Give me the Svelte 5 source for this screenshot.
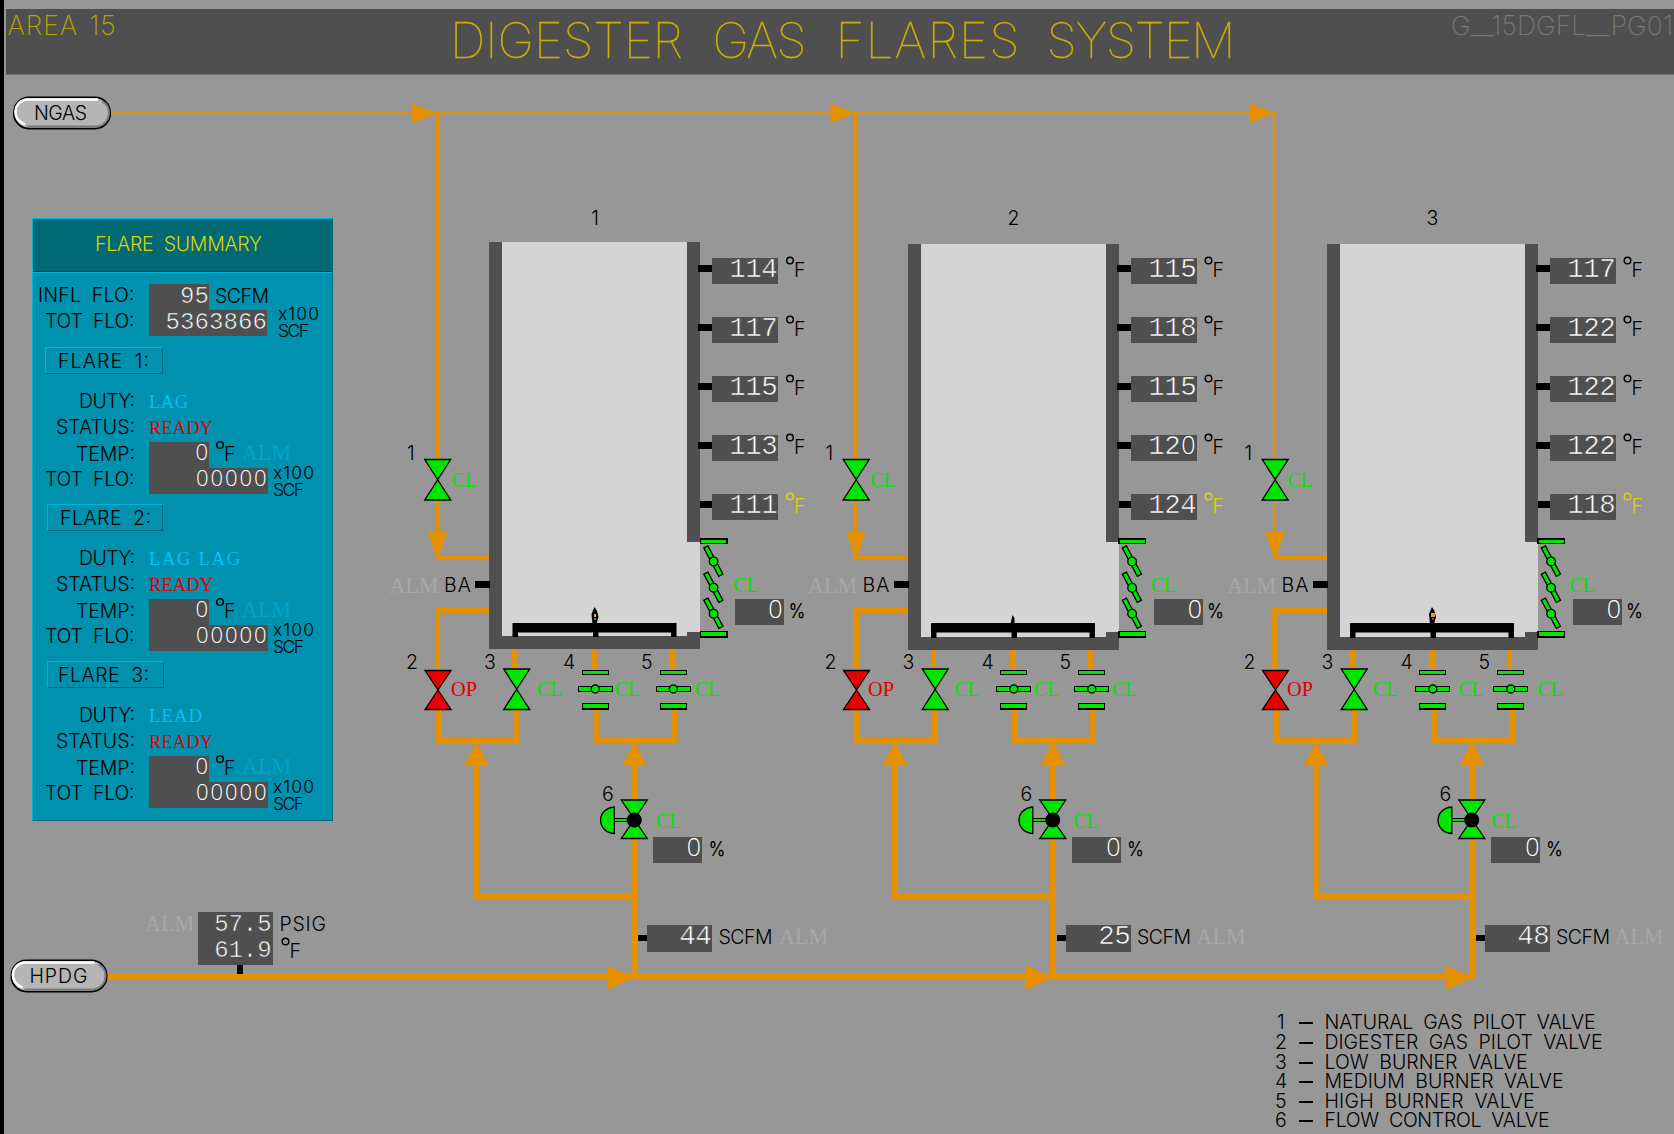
<script>
  // Horizontal origin of each flare train plus the label positions that differ between trains.
  const flares = [
    { n: 1, dx: 0, bx: 0, almX: 779, top: 242, floor: 636, temps: [114, 117, 115, 113, 111], flow: 44,
      cl1: 452, op: 451, cl3: 537, cl4: 615, cl5: 695, cl6: 656, clD: 733.5, flame: 'small', riser: 476.5, arrow: 607.5 },
    { n: 2, dx: 418.5, bx: 1, almX: 778, top: 244, floor: 637, temps: [115, 118, 115, 120, 124], flow: 25,
      cl1: 452, op: 449.5, cl3: 536, cl4: 615.5, cl5: 693.5, cl6: 655, clD: 732.5, flame: 'out', riser: 476.5, arrow: 607.5 },
    { n: 3, dx: 837.5, bx: 1, almX: 777, top: 244, floor: 637, temps: [117, 122, 122, 122, 118], flow: 48,
      cl1: 450, op: 449.5, cl3: 535.5, cl4: 621, cl5: 700, cl6: 654, clD: 732, flame: 'big', riser: 478.5, arrow: 608.5 }
  ];

  const tempRows = [268, 327, 386, 445, 504];

  const summary = [
    { n: 1, duty: 'LAG', dutyW: 39 },
    { n: 2, duty: 'LAG LAG', dutyW: 91 },
    { n: 3, duty: 'LEAD', dutyW: 53 }
  ];

  const titleWords = [
    { t: 'DIGESTER', x: 444, w: 233 },
    { t: 'GAS', x: 706.5, w: 94 },
    { t: 'FLARES', x: 829.5, w: 184 },
    { t: 'SYSTEM', x: 1040.5, w: 189 }
  ];

  const legend = [
    { t: 'NATURAL GAS PILOT VALVE', w: 271, y: 1029 },
    { t: 'DIGESTER GAS PILOT VALVE', w: 278, y: 1049 },
    { t: 'LOW BURNER VALVE', w: 203, y: 1069 },
    { t: 'MEDIUM BURNER VALVE', w: 239, y: 1088 },
    { t: 'HIGH BURNER VALVE', w: 210, y: 1108 },
    { t: 'FLOW CONTROL VALVE', w: 225, y: 1127 }
  ];

  const chars = (v) => String(v).split('');
</script>

{#snippet word(t, w, cls)}
  <svg class="word" width={w + 2} height="22"><text class={cls} x="0" y="17" textLength={w}>{t}</text></svg>
{/snippet}

<!-- right-aligned readout digits; zeros use an open, undotted glyph -->
{#snippet digits(v, right, y, pitch, size)}
  {#each chars(v) as c, i}
    <text class="digit {size}" class:zero={c === '0'} x={right - (chars(v).length - i - 0.5) * pitch} {y}>{c}</text>
  {/each}
{/snippet}

{#snippet degF(x, y)}
  <circle class="ring" cx={x + 4} cy={y - 16} r="3.3" />
  <text class="st" x={x + 8} {y}>F</text>
{/snippet}

{#snippet gate(x, top, bottom, color)}
  {@const mid = (top + bottom) / 2}
  <path class="sym {color}" d="M{x - 13} {top}H{x + 13}L{x} {mid}L{x + 13} {bottom}H{x - 13}L{x} {mid}Z" />
{/snippet}

{#snippet butterfly(x)}
  <rect class="sym green" x={x - 13} y="670.5" width="26" height="4" />
  <rect class="sym green" x={x - 17} y="686.5" width="34" height="5" />
  <circle class="sym green" cx={x} cy="689" r="4" />
  <rect class="sym green" x={x - 13} y="703.5" width="26" height="5.5" />
{/snippet}

{#snippet slab(t, x, y, w, cls)}
  <text class="slab {cls}" {x} {y} textLength={w} lengthAdjust="spacingAndGlyphs">{t}</text>
{/snippet}

<div class="screen">
  <svg class="canvas" width="1674" height="1134" viewBox="0 0 1674 1134">
    <g class="pipe">
      <path class="thin" d="M111 112.7H1275" />
      <path d="M108 976.7H1474" />
    </g>

    {#each flares as f}
      <g transform="translate({f.dx} 0)">
        <g class="pipe">
          <path class="thin" d="M437.3 112V557H490" />
          <path d="M490 610.5H437.5V672" />
          <path d="M438.7 706V741H516.5V706M515 645V670" />
          <path d="M594.5 645V672M672 645V672" />
          <path d="M596.3 706V740H674.3V706" />
          <path d="M634.8 978V745M634.8 897H{f.riser}V750" />
        </g>
        <path class="orange" d="M412 103.5L437 113L412 123Z" />
        <path class="orange" d="M427.5 531H447.5L439 556H436Z" />
        <path class="orange" d="M{f.riser} 742L{f.riser + 12.5} 766H{f.riser - 12.5}Z" />
        <path class="orange" d="M634.5 741L647 766H622Z" />
        <path class="orange" d="M{f.arrow} 965.5L{f.arrow + 26} 977.5L{f.arrow} 990Z" />

        <!-- combustion chamber -->
        <rect class="inner" x="500" y={f.top} width="200" height={f.floor - f.top} />
        <rect class="wall" x="489" y={f.top} width="13" height={f.floor - f.top + 13} />
        <rect class="wall" x="687" y={f.top} width="13" height={542 - f.top} />
        <rect class="wall" x="489" y={f.floor} width="211" height="13" />
        <rect class="wall" x="687" y="632" width="13" height="10" />

        <!-- burner manifold and pilot flame -->
        <path d="M512.5 623H676.5V{f.floor + 1}H671V632.5H598.5V{f.floor + 1}H593V632.5H518V{f.floor + 1}H512.5Z" />
        {#if f.flame === 'out'}
          <path d="M592 624L594 615L596 618V624Z" />
        {:else}
          <path d="M592.5 624L591.5 614L594.5 607L597 611L598.5 617L596.5 624Z" />
          <rect x="594" y="614" width="2" height="3" fill="#f0b400" />
          <rect x="594" y="618" width="2" height="2" fill={f.flame === 'big' ? '#d8251c' : '#1f8fc9'} />
          {#if f.flame === 'big'}
            <rect x="593" y="613" width="4" height="4" fill="#c9a23c" />
          {/if}
        {/if}

        <text class="st mid" x="595" y="225">{f.n}</text>

        {#each f.temps as t, i}
          {@const y = tempRows[i]}
          <rect x={i === 4 ? 700 : 698} y={y - 3} width="14" height="6.5" />
          <rect class="box" x={711.5 + f.bx} y={y - 10} width="66" height="26" />
          {@render digits(t, 777.5 + f.bx / 2, y + 9, 16, 'big')}
          <g class:yellow={i === 4}>{@render degF(786, y + 8.5)}</g>
        {/each}

        <!-- pilot gas valves -->
        {@render gate(437.7, 459.5, 500, 'green')}
        <text class="st" x="407" y="460">1</text>
        {@render slab('CL', f.cl1, 486.5, 25, 'greenT')}
        {@render gate(438, 670.5, 709.5, 'red')}
        <text class="st" x="406" y="669">2</text>
        {@render slab('OP', f.op, 695.5, 26, 'redO')}

        {@render slab('ALM', 389.5, 592.5, 49, 'alm')}
        <text class="st" x="444" y="591.5" textLength="27">BA</text>
        <rect x="475" y="581" width="15" height="6.5" />

        <!-- air damper -->
        <rect class="sym green" x="700.5" y="539" width="26.5" height="4.5" />
        {#each [561.5, 587.7, 613.7] as y}
          <g transform="translate(713.6 {y})">
            <rect class="sym green dash" x="-2.3" y="-16.5" width="4.6" height="32" transform="rotate(-28)" />
            <circle class="sym green" r="4.3" />
          </g>
        {/each}
        <rect class="sym green" x="700.5" y="631.5" width="26.5" height="5.5" />
        {@render slab('CL', f.clD, 591.5, 25, 'greenT')}
        <rect class="box" x={734.5 + f.bx} y="599" width="49" height="25.5" />
        {@render digits(0, 783.5 + f.bx, 617.5, 16, 'big')}
        <text class="st pct" x="788.5" y="617.5" textLength="17" lengthAdjust="spacingAndGlyphs">%</text>

        <!-- burner valves -->
        {@render gate(516.7, 669, 709.5, 'green')}
        <text class="st" x="484" y="669">3</text>
        {@render slab('CL', f.cl3, 695.5, 25, 'greenT')}
        {@render butterfly(595.3)}
        <text class="st" x="563" y="669">4</text>
        {@render slab('CL', f.cl4, 695.5, 25, 'greenT')}
        {@render butterfly(673.3)}
        <text class="st" x="641" y="669">5</text>
        {@render slab('CL', f.cl5, 695.5, 25, 'greenT')}

        <!-- flow control valve -->
        {@render gate(634.3, 800, 838.5, 'green')}
        <rect class="sym green" x="614" y="818.3" width="16" height="3" />
        <path class="sym green" d="M614.3 807V833.5C596 832 596 808.5 614.3 807Z" />
        <circle cx="634.3" cy="820" r="7.5" />
        <text class="st" x="602" y="800.5">6</text>
        {@render slab('CL', f.cl6, 827.5, 25, 'greenT')}
        <rect class="box" x={652.5 + f.bx} y="837" width="49" height="25.5" />
        {@render digits(0, 702 + f.bx, 855.5, 16, 'big')}
        <text class="st pct" x="708.5" y="855.5" textLength="17" lengthAdjust="spacingAndGlyphs">%</text>

        <rect x="638" y="935" width="9" height="6" />
        <rect class="box" x={646.5 + f.bx / 2} y="925" width="65.5" height="27" />
        {@render digits(f.flow, 711.5 + f.bx / 2, 943.5, 16, 'big')}
        <text class="st" x="718.5" y="943.5" textLength="54">SCFM</text>
        {@render slab('ALM', f.almX, 943.5, 49, 'alm')}
      </g>
    {/each}

    <!-- header gas pressure / temperature -->
    {@render slab('ALM', 145, 930.5, 49, 'alm')}
    <rect x="236.5" y="964" width="6" height="10" />
    <rect class="box" x="198" y="912" width="75" height="52.5" />
    {@render digits('57.5', 271.5, 931, 14.3, 'mid')}
    {@render digits('61.9', 271.5, 957, 14.3, 'mid')}
    <text class="st" x="279.5" y="930.5" textLength="46.5">PSIG</text>
    {@render degF(281.5, 957.5)}

    {#each legend as l, i}
      <text class="st" x={i === 0 ? 1277 : 1275} y={l.y}>{i + 1}</text>
      <rect x="1299" y={l.y - 7} width="13.5" height="1.5" />
      <text class="st words" x="1324.5" y={l.y} textLength={l.w}>{l.t}</text>
    {/each}

    {#each [{ x: 13, y: 96.5, w: 98, t: 'NGAS', tx: 34, tw: 53 }, { x: 10.5, y: 959.5, w: 97, t: 'HPDG', tx: 29.5, tw: 58 }] as p}
      <rect class="pill" x={p.x + 0.9} y={p.y + 0.9} width={p.w - 1.8} height="31.2" rx="15" />
      <path class="lit" d="M{p.x + 12} {p.y + 28}C{p.x - 1} {p.y + 24} {p.x - 1} {p.y + 6} {p.x + 13} {p.y + 3}H{p.x + p.w - 13}" />
      <path class="shade" d="M{p.x + 14} {p.y + 30}H{p.x + p.w - 13}C{p.x + p.w + 1} {p.y + 26} {p.x + p.w + 1} {p.y + 9} {p.x + p.w - 9} {p.y + 5}" />
      <text class="st" x={p.tx} y={p.y + 23.5} textLength={p.tw}>{p.t}</text>
    {/each}
  </svg>

  <header>
    <svg class="bar" width="1668" height="66">
      <text class="area" x="1.5" y="26" textLength="108">AREA 15</text>
      {#each titleWords as w}
        <text class="title" x={w.x} y="48.7" textLength={w.w}>{w.t}</text>
      {/each}
      <text class="page" x="1445" y="26" textLength="222">G__15DGFL__PG01</text>
    </svg>
  </header>

  <section class="panel">
    <h2>{@render word('FLARE SUMMARY', 167, 'st yel words')}</h2>
    <div class="body">
      <div class="row">
        <span class="label">{@render word('INFL FLO:', 96.5, 'st words')}</span>
        <svg class="short" width="60" height="26">{@render digits('95', 60, 18.7, 14.5, 'mid')}</svg>
        <span class="unit">{@render word('SCFM', 54, 'st')}</span>
      </div>
      <div class="row">
        <span class="label">{@render word('TOT FLO:', 89.5, 'st words')}</span>
        <svg class="long" width="118" height="26">{@render digits('5363866', 118, 18.7, 14.5, 'mid')}</svg>
        <svg class="scale first" width="44" height="34">
          <text class="st sm" x="0" y="13.3" textLength="41">x100</text>
          <text class="st sm" x="0" y="29.5" textLength="31">SCF</text>
        </svg>
      </div>
      {#each summary as s}
        <div class="block">
          <div class="btn b{s.n}">{@render word(`FLARE ${s.n}:`, 91, 'st words')}</div>
          <div class="row">
            <span class="label">{@render word('DUTY:', 56, 'st')}</span>
            <span class="state">{@render word(s.duty, s.dutyW, 'slab cyan')}</span>
          </div>
          <div class="row">
            <span class="label">{@render word('STATUS:', 79, 'st')}</span>
            <span class="state">{@render word('READY', 64, 'slab redT')}</span>
          </div>
          <div class="row">
            <span class="label temp">{@render word('TEMP:', 59, 'st')}</span>
            <svg class="short" width="60" height="26">{@render digits('0', 60, 18.2, 14.5, 'mid')}</svg>
            <svg class="extra" width="90" height="26">
              {@render degF(7, 19)}
              {@render slab('ALM', 33, 18, 49, 'almP')}
            </svg>
          </div>
          <div class="row">
            <span class="label">{@render word('TOT FLO:', 89.5, 'st words')}</span>
            <svg class="long" width="119" height="26">{@render digits('00000', 118.5, 18.2, 14.5, 'mid')}</svg>
            <svg class="scale" width="44" height="34">
              <text class="st sm" x="0" y="13.3" textLength="41">x100</text>
              <text class="st sm" x="0" y="29.5" textLength="31">SCF</text>
            </svg>
          </div>
        </div>
      {/each}
    </div>
  </section>
</div>

<style>
  :global(body) { background: #979797; overflow: hidden; }
  .screen {
    position: relative;
    box-sizing: border-box;
    width: 1674px;
    height: 1134px;
    padding-top: 9px;
    overflow: hidden;
    background: #979797;
    border-left: 4px solid #000;
  }
  .canvas { position: absolute; left: -4px; top: 0; }
  svg { display: block; flex: none; overflow: visible; }
  .canvas rect, .canvas .pipe path { shape-rendering: crispEdges; }
  .canvas .dash { shape-rendering: auto; }

  header {
    position: relative;
    margin-left: 2px;
    height: 65px;
    background: #4f4f4f;
    border-bottom: 1px solid #717171;
  }

  text { font-family: Inter, 'Liberation Sans', sans-serif; }
  .st { font-size: 19.5px; font-weight: 300; fill: #000; }
  .words { word-spacing: 5px; }
  .sm { font-size: 17.5px; }
  .mid { text-anchor: middle; }
  .pct { font-weight: 400; }
  .yel, .yellow .st { fill: #dcd600; }
  .ring { fill: none; stroke: #000; stroke-width: 1.5; }
  .yellow .ring { stroke: #dcd600; }
  .title { font-size: 49.5px; font-weight: 100; fill: #cbb200; stroke: #cbb200; stroke-width: 0.4; }
  .area { font-size: 26.5px; font-weight: 200; fill: #b8a400; word-spacing: 3px; }
  .page { font-size: 26.5px; font-weight: 200; fill: #777; }

  /* a hairline in the readout's own colour slims the digit strokes */
  .digit { font-family: 'Liberation Mono', monospace; text-anchor: middle; fill: #fff; stroke: #4f4f4f; stroke-width: 0.6; }
  .digit.big { font-size: 27.5px; }
  .digit.mid { font-size: 24px; }
  .digit.zero { font-family: 'Open Sans', Roboto, sans-serif; font-weight: 300; stroke: none; }
  .digit.zero.big { font-size: 25px; }
  .digit.zero.mid { font-size: 22px; }

  .slab { font-family: 'Liberation Serif', 'DejaVu Serif', serif; font-size: 18.5px; }
  .greenT { fill: #00e400; font-size: 20px; }
  .redO { fill: #e00000; font-size: 20px; }
  .redT { fill: #e00000; }
  .cyan { fill: #00c4f8; }
  .alm { fill: #a7a7a7; font-size: 23.5px; }
  .almP { fill: #00a5c8; font-size: 23px; }

  .pipe path { fill: none; stroke: #e69100; stroke-width: 5.7; }
  .pipe .thin { stroke-width: 3; }
  .orange { fill: #e69100; }
  .wall, .box { fill: #4f4f4f; }
  .inner { fill: #d4d4d4; }
  .sym { stroke: #000; stroke-width: 1.3; }
  .green { fill: #00e400; }
  .red { fill: #e60000; }
  .pill { fill: #b5b5b5; stroke: #000; stroke-width: 1.8; }
  .canvas .pill { shape-rendering: auto; }
  .lit { fill: none; stroke: #fff; stroke-width: 2.6; }
  .shade { fill: none; stroke: #7b7b7b; stroke-width: 2; }

  .panel {
    position: relative;
    box-sizing: border-box;
    width: 301px;
    height: 603px;
    margin: 143px 0 0 28px;
    background: #0091ae;
    border: 1px solid #00b4da;
    border-right-color: #00687c;
    border-bottom-color: #00687c;
  }
  h2 {
    display: flex;
    justify-content: center;
    box-sizing: border-box;
    height: 53px;
    margin: 0;
    padding: 15px 7px 0 0;
    background: #006974;
    border-bottom: 1px solid #003c44;
    box-shadow: 0 1px 0 #00b4da;
  }
  .body { padding-top: 12px; }
  .row { display: flex; height: 26px; }
  .label { display: flex; flex: none; box-sizing: border-box; justify-content: flex-end; width: 103.5px; padding-top: 1px; margin-right: 12.5px; }
  .temp { padding-top: 1.5px; }
  .short, .long { background: #4f4f4f; }
  .unit { padding: 1.5px 0 0 6px; }
  .state { padding-top: 0.5px; }
  .scale { margin: -2px 0 0 5px; }
  .scale.first { margin: -3px 0 0 11px; }
  .block { height: 157px; }
  .body .block:nth-child(3) { margin-top: 11px; }
  .btn {
    box-sizing: border-box;
    width: 118px;
    height: 27px;
    margin: 0 0 16px 12px;
    padding: 3px 0 0 11.5px;
    border: 1px solid #00b4da;
    border-right-color: #00687c;
    border-bottom-color: #00687c;
  }
  .btn.b2 { width: 116px; margin-left: 14px; padding-left: 12px; }
  .btn.b3 { width: 117px; margin-left: 14px; padding-left: 9.5px; }
</style>
